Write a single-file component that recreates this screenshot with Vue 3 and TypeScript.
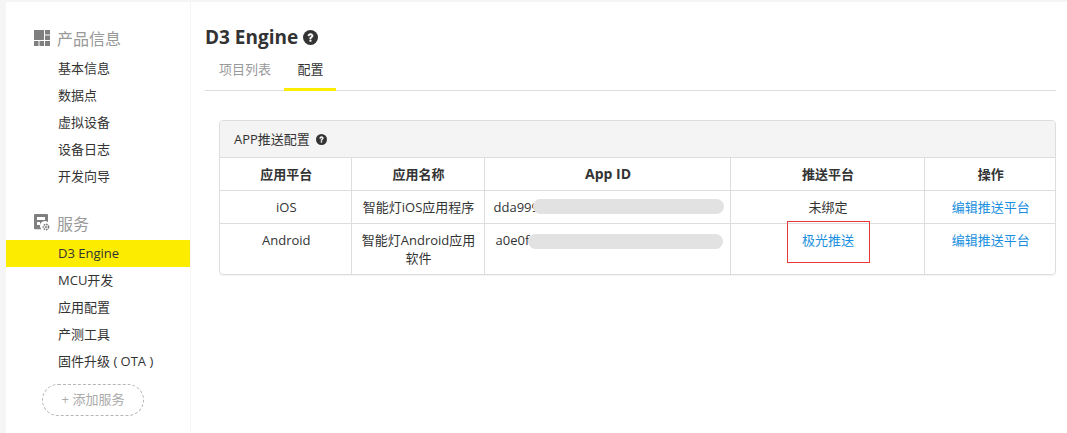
<script setup lang="ts">
interface NavItem { label: string; active?: boolean }
const productNav: NavItem[] = [
  { label: '基本信息' }, { label: '数据点' }, { label: '虚拟设备' }, { label: '设备日志' }, { label: '开发向导' },
]
const serviceNav: NavItem[] = [
  { label: 'D3 Engine', active: true }, { label: 'MCU开发' }, { label: '应用配置' }, { label: '产测工具' }, { label: '固件升级 ( OTA )' },
]
</script>

<template>
  <div class="page">
    <aside class="side">
      <div class="group-title first">
        <svg class="gi" width="16" height="16" viewBox="0 0 16 16"><g fill="#7f7f7f"><rect x="0" y="0" width="10" height="10"/><rect x="11" y="0" width="5" height="4.5"/><rect x="11" y="5.5" width="5" height="4.5"/><rect x="0" y="11" width="4.5" height="5"/><rect x="5.5" y="11" width="4.5" height="5"/><rect x="11" y="11" width="5" height="5"/></g></svg>
        <span>产品信息</span>
      </div>
      <a v-for="n in productNav" :key="n.label" class="nav">{{ n.label }}</a>
      <div class="group-title second">
        <svg class="gi" width="16" height="17" viewBox="0 0 16 17"><path fill="#7f7f7f" d="M1 0h12a1 1 0 0 1 1 1v7.200a4.600 4.600 0 0 0-6.500 7H1a1 1 0 0 1-1-1V1a1 1 0 0 1 1-1z"/><rect x="3" y="3" width="8" height="3" fill="#fff"/><rect x="3" y="8" width="3" height="3" fill="#fff"/><circle cx="12" cy="13" r="2.600" fill="none" stroke="#7f7f7f" stroke-width="1.600" stroke-dasharray="1.600 .8"/><circle cx="12" cy="13" r="1" fill="#7f7f7f"/></svg>
        <span>服务</span>
      </div>
      <a v-for="n in serviceNav" :key="n.label" class="nav" :class="{ active: n.active }">{{ n.label }}</a>
      <div class="add">+ 添加服务</div>
    </aside>
    <main class="main">
      <h1 class="title">D3 Engine
        <svg class="help" width="15" height="15" viewBox="0 0 16 16"><circle cx="8" cy="8" r="8" fill="#333"/><path d="M5.200 6.200C5.300 4.600 6.500 3.700 8 3.700c1.600 0 2.800 1 2.800 2.400 0 1-.5 1.500-1.300 2.100-.7.5-.9.7-.9 1.400H7.100c0-1.200.3-1.700 1.100-2.300.6-.4.9-.7.9-1.100 0-.5-.5-.9-1.100-.9-.7 0-1.100.4-1.200 1.100z" fill="#fff" stroke="#fff" stroke-width=".5"/><rect x="6.900" y="10.400" width="2.100" height="2.100" fill="#fff"/></svg>
      </h1>
      <nav class="tabs">
        <a class="tab first-tab">项目列表</a>
        <a class="tab on">配置</a>
      </nav>
      <section class="panel">
        <header class="panel-head">APP推送配置
          <svg class="help small" width="11" height="11" viewBox="0 0 16 16"><circle cx="8" cy="8" r="8" fill="#333"/><path d="M5.200 6.200C5.300 4.600 6.500 3.700 8 3.700c1.600 0 2.800 1 2.800 2.400 0 1-.5 1.500-1.300 2.100-.7.5-.9.7-.9 1.400H7.100c0-1.200.3-1.700 1.100-2.300.6-.4.9-.7.9-1.100 0-.5-.5-.9-1.100-.9-.7 0-1.100.4-1.200 1.100z" fill="#fff" stroke="#fff" stroke-width=".5"/><rect x="6.900" y="10.400" width="2.100" height="2.100" fill="#fff"/></svg>
        </header>
        <table class="tbl">
          <colgroup><col class="c1"><col class="c2"><col class="c3"><col class="c4"><col class="c5"></colgroup>
          <thead>
            <tr><th>应用平台</th><th>应用名称</th><th class="latin">App ID</th><th>推送平台</th><th>操作</th></tr>
          </thead>
          <tbody>
            <tr>
              <td>iOS</td>
              <td>智能灯iOS应用程序</td>
              <td class="id"><span class="idtext">dda999</span><i class="mask m1"></i></td>
              <td>未绑定</td>
              <td><a class="link">编辑推送平台</a></td>
            </tr>
            <tr class="tall">
              <td>Android</td>
              <td>智能灯Android应用软件</td>
              <td class="id"><span class="idtext second-id">a0e0f</span><i class="mask m2"></i></td>
              <td class="pushcell"><a class="link">极光推送</a><i class="redbox"></i></td>
              <td><a class="link">编辑推送平台</a></td>
            </tr>
          </tbody>
        </table>
      </section>
    </main>
  </div>
</template>

<style>
html, body { margin: 0; background: #f5f5f5; }
</style>

<style scoped>
.page {
  display: flex; gap: 1px; height: 431px; padding: 2px 0 0 6px; overflow: hidden; color: #333;
  font-family: "Open Sans", "Noto Sans CJK SC", sans-serif; font-size: 13px;
}
.side { width: 184px; background: #fff; flex: none; display: flex; flex-direction: column; }
.group-title { display: flex; align-items: center; height: 27px; padding-left: 28px; gap: 7px; color: #999; font-size: 16px; flex: none; }
.group-title.first { margin: 22px 0 4px; }
.group-title.second { margin: 19px 0 4px; }
.nav { display: block; height: 27px; line-height: 27px; padding-left: 52px; color: #333; flex: none; }
.nav.active { background: #fcec00; }
.add {
  box-sizing: border-box; width: 102px; height: 32px; margin: 9px 0 0 36px; border: 1px dashed #b5b5b5; border-radius: 16px;
  text-align: center; line-height: 29px; color: #aaa; flex: none;
}
.main { flex: 1; background: #fff; padding: 0 11px 0 14px; min-width: 0; }
.title { margin: 22px 0 0; font-size: 19px; font-weight: 700; line-height: 27px; color: #333; display: flex; align-items: center; gap: 5px; }
.tabs { display: flex; height: 39px; border-bottom: 1px solid #ddd; }
.tab { box-sizing: border-box; width: 52px; height: 40px; line-height: 36px; text-align: center; color: #999; white-space: nowrap; flex: none; }
.first-tab { width: 79px; padding-left: 14px; text-align: left; }
.tab.on { color: #333; border-bottom: 3px solid #fcec00; padding-left: 1px; }
.panel { margin: 29px 0 0 14px; border: 1px solid #ddd; border-radius: 4px; overflow: hidden; box-shadow: 0 1px 1px rgba(0,0,0,.05); }
.panel-head { box-sizing: border-box; height: 37px; background: #f4f4f4; padding-left: 14px; line-height: 36px; display: flex; align-items: center; gap: 6px; border-bottom: 1px solid #ddd; }
.tbl { width: 100%; border-collapse: collapse; table-layout: fixed; }
.c1 { width: 131px; } .c2 { width: 133px; } .c3 { width: 246px; } .c4 { width: 194px; } .c5 { width: auto; }
.tbl th, .tbl td { border: 1px solid #ddd; text-align: center; padding: 0 7px 0 9px; height: 32px; line-height: 18px; font-weight: 400; }
.tbl th { font-weight: 700; }
.tbl th.latin { font-size: 14px; }
.tbl thead tr th { border-top: 0; }
.tbl th:first-child, .tbl td:first-child { border-left: 0; }
.tbl th:last-child, .tbl td:last-child { border-right: 0; }
.tbl tbody tr:last-child td { border-bottom: 0; }
.tall td { height: 50px; vertical-align: top; padding-top: 7px; padding-bottom: 7px; box-sizing: border-box; }
.id { position: relative; text-align: left !important; white-space: nowrap; overflow: hidden; }
.second-id { margin-left: 2px; }
.mask { position: absolute; height: 15px; background: #e2e2e2; border-radius: 8px; }
.m1 { left: 48px; right: 6px; top: 8px; }
.m2 { left: 43px; right: 7px; top: 10px; }
.link { color: #1a8fe0; }
.pushcell { position: relative; }
.redbox { position: absolute; left: 56px; top: -3px; width: 81px; height: 40px; border: 1px solid #e8393a; }
</style>
